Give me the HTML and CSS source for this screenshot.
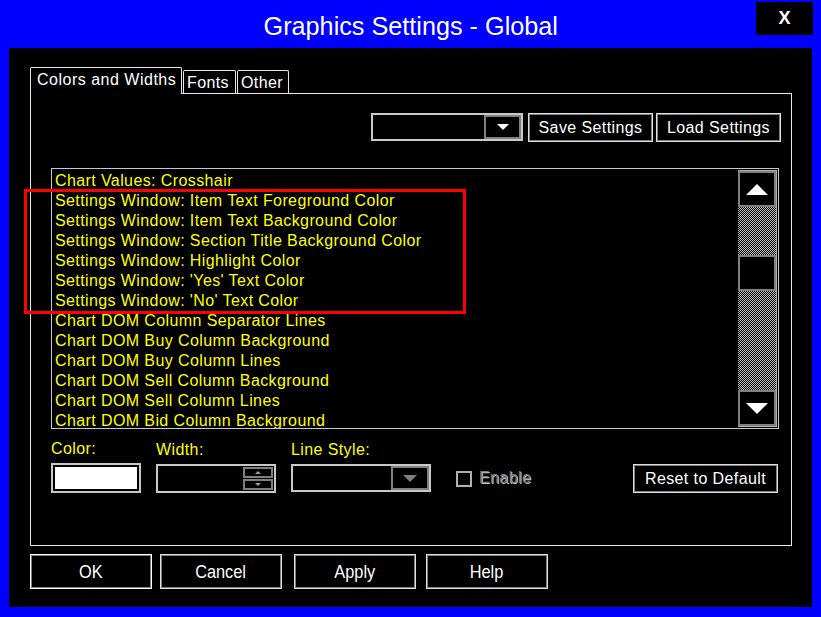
FILE: index.html
```html
<!DOCTYPE html>
<html>
<head>
<meta charset="utf-8">
<title>Graphics Settings - Global</title>
<link rel="stylesheet" href="styles.css">
</head>
<body>
<div class="window">
  <div class="titlebar">
    <span class="title">Graphics Settings - Global</span>
    <div class="close">X</div>
  </div>
  <div class="client">
    <div class="tabs">
      <div class="tab active">Colors and Widths</div>
      <div class="tab">Fonts</div>
      <div class="tab">Other</div>
    </div>
    <div class="panel">
      <div class="toprow">
        <div class="combo">
          <div class="combo-field"></div>
          <div class="combo-btn"><span class="tri-down white"></span></div>
        </div>
        <div class="btn save">Save Settings</div>
        <div class="btn load">Load Settings</div>
      </div>
      <div class="listwrap">
        <div class="list">
          <div class="row">Chart Values: Crosshair</div>
          <div class="row">Settings Window: Item Text Foreground Color</div>
          <div class="row">Settings Window: Item Text Background Color</div>
          <div class="row">Settings Window: Section Title Background Color</div>
          <div class="row">Settings Window: Highlight Color</div>
          <div class="row">Settings Window: 'Yes' Text Color</div>
          <div class="row">Settings Window: 'No' Text Color</div>
          <div class="row">Chart DOM Column Separator Lines</div>
          <div class="row">Chart DOM Buy Column Background</div>
          <div class="row">Chart DOM Buy Column Lines</div>
          <div class="row">Chart DOM Sell Column Background</div>
          <div class="row">Chart DOM Sell Column Lines</div>
          <div class="row">Chart DOM Bid Column Background</div>
        </div>
        <div class="scrollbar">
          <div class="sb-btn"><span class="tri-up big"></span></div>
          <div class="sb-track t1"></div>
          <div class="sb-thumb"></div>
          <div class="sb-track t2"></div>
          <div class="sb-btn"><span class="tri-down big"></span></div>
        </div>
      </div>
      <div class="controls">
        <div class="group g-color">
          <div class="label">Color:</div>
          <div class="swatch"><div class="swatch-fill"></div></div>
        </div>
        <div class="group g-width">
          <div class="label">Width:</div>
          <div class="spin">
            <div class="spin-field"></div>
            <div class="spin-btns">
              <div class="spin-btn"><span class="tri-up small"></span></div>
              <div class="spin-btn"><span class="tri-down small"></span></div>
            </div>
          </div>
        </div>
        <div class="group g-style">
          <div class="label">Line Style:</div>
          <div class="lcombo">
            <div class="lcombo-field"></div>
            <div class="lcombo-btn"><span class="tri-down gray"></span></div>
          </div>
        </div>
        <div class="enable">
          <span class="checkbox"></span>
          <span class="enable-text">Enable</span>
        </div>
        <div class="btn reset">Reset to Default</div>
      </div>
    </div>
    <div class="buttons">
      <div class="dbtn ok"><span class="dlabel">OK</span></div>
      <div class="dbtn cancel"><span class="dlabel">Cancel</span></div>
      <div class="dbtn apply"><span class="dlabel">Apply</span></div>
      <div class="dbtn help"><span class="dlabel">Help</span></div>
    </div>
  </div>
  <div class="highlight"></div>
</div>
</body>
</html>
```
FILE: styles.css
```css
* { box-sizing: border-box; }
html, body { margin: 0; padding: 0; background: #0000ff; }
body { font-family: "Liberation Sans", Arial, sans-serif; }

.window {
  position: relative;
  width: 821px;
  height: 617px;
  background: #0000ff;
  padding: 0 9px 10px 9px;
  display: flex;
  flex-direction: column;
}

.titlebar {
  position: relative;
  height: 48px;
  display: flex;
  align-items: center;
  justify-content: center;
}
.title {
  color: #fff;
  font-size: 26px;
  font-family: "Liberation Sans", sans-serif;
  display: inline-block;
  transform: scaleX(0.97);
  margin-top: 5px;
}
.close {
  position: absolute;
  right: -1px;
  top: 2px;
  width: 57px;
  height: 33px;
  background: #000;
  color: #fff;
  font-weight: bold;
  font-size: 18px;
  display: flex;
  align-items: center;
  justify-content: center;
}

.client {
  flex: 1;
  background: #000;
  padding: 19px 20px 0 21px;
  display: flex;
  flex-direction: column;
  font-size: 16px;
  letter-spacing: 0.4px;
}

.tabs {
  display: flex;
  align-items: flex-end;
  height: 26px;
  position: relative;
  z-index: 1;
}
.tab {
  color: #fff;
  background: #000;
  border: 1px solid #e8e8e8;
  border-bottom: none;
  border-radius: 2px 2px 0 0;
  height: 23px;
  padding: 2px 0 0 3px;
  line-height: 20px;
}
.tab.active {
  width: 152px;
  height: 27px;
  margin-bottom: -1px;
  padding: 2px 0 0 6px;
  letter-spacing: 0.5px;
}
.tab:nth-child(2) { width: 53px; margin-left: 1px; }
.tab:nth-child(3) { width: 52px; margin-left: 1px; }

.panel {
  width: 762px;
  height: 453px;
  border: 1px solid #e8e8e8;
  padding: 19px 10px 0 20px;
  display: flex;
  flex-direction: column;
}

.toprow {
  display: flex;
  justify-content: flex-end;
  align-items: flex-start;
  height: 29px;
}
.combo {
  width: 152px;
  height: 28px;
  border: 2px solid #c8c8c8;
  display: flex;
  margin-right: 5px;
}
.combo-field { flex: 1; }
.combo-btn {
  width: 37px;
  border: 2px solid #808080;
  display: flex;
  align-items: center;
  justify-content: center;
}
.btn {
  color: #fff;
  border: 1px solid #e0e0e0;
  box-shadow: inset 0 0 0 1px #808080;
  display: flex;
  align-items: center;
  justify-content: center;
  height: 29px;
}
.save { width: 125px; margin-right: 3px; }
.load { width: 125px; }

.listwrap {
  margin-top: 26px;
  width: 728px;
  height: 261px;
  border: 1px solid #c8c8c8;
  display: flex;
}
.list { flex: 1; padding: 2px 0 0 3px; overflow: hidden; }
.row {
  color: #ffff00;
  height: 20px;
  line-height: 20px;
  white-space: nowrap;
}
.scrollbar {
  width: 39px;
  margin: 1px 1px 1px 0;
  border: 1px solid #b0b0b0;
  border-left: none;
  display: flex;
  flex-direction: column;
}
.sb-btn {
  height: 36px;
  border: 2px solid #808080;
  background: #000;
  display: flex;
  align-items: center;
  justify-content: center;
}
.sb-track {
  background: repeating-conic-gradient(#c0c0c0 0 25%, #000 0 50%) 0 0 / 2px 2px;
}
.t1 { height: 48px; }
.t2 { flex: 1; }
.sb-thumb {
  height: 36px;
  border: 2px solid #808080;
  background: #000;
}

.tri-up, .tri-down { width: 0; height: 0; display: block; }
.tri-up.big { border-left: 11px solid transparent; border-right: 11px solid transparent; border-bottom: 11px solid #fff; }
.tri-down.big { border-left: 11px solid transparent; border-right: 11px solid transparent; border-top: 11px solid #fff; }
.tri-down.white { border-left: 6px solid transparent; border-right: 6px solid transparent; border-top: 6px solid #fff; }
.tri-down.gray { border-left: 7px solid transparent; border-right: 7px solid transparent; border-top: 7px solid #808080; }
.tri-up.small { border-left: 3px solid transparent; border-right: 3px solid transparent; border-bottom: 3px solid #a0a0a0; }
.tri-down.small { border-left: 3px solid transparent; border-right: 3px solid transparent; border-top: 3px solid #a0a0a0; }

.controls {
  display: flex;
  align-items: flex-end;
  margin-top: 11px;
}
.group { display: flex; flex-direction: column; }
.label {
  color: #ffff00;
  height: 23px;
  line-height: 18px;
}
.swatch {
  width: 90px;
  height: 30px;
  border: 2px solid #c8c8c8;
  padding: 2px;
}
.swatch-fill { width: 100%; height: 100%; background: #fff; }
.g-width { margin-left: 15px; }
.spin {
  width: 120px;
  height: 29px;
  border: 2px solid #c8c8c8;
  display: flex;
}
.spin-field { flex: 1; }
.spin-btns {
  width: 31px;
  display: flex;
  flex-direction: column;
  padding: 1px 1px 1px 0;
  gap: 1px;
}
.spin-btn {
  flex: 1;
  border: 2px solid #808080;
  display: flex;
  align-items: center;
  justify-content: center;
}
.g-style { margin-left: 15px; }
.lcombo {
  width: 140px;
  height: 28px;
  border: 2px solid #c8c8c8;
  display: flex;
  margin-bottom: 1px;
}
.lcombo-field { flex: 1; }
.lcombo-btn {
  width: 38px;
  border: 2px solid #808080;
  display: flex;
  align-items: center;
  justify-content: center;
}
.enable {
  display: flex;
  align-items: center;
  margin-left: 25px;
  height: 29px;
}
.checkbox {
  width: 16px;
  height: 16px;
  border: 2px solid #b0b0b0;
  margin-right: 7px;
}
.enable-text {
  color: #808080;
  text-shadow: 1px 1px 0 #c0c0c0;
  margin-top: -1px;
}
.reset {
  margin-left: auto;
  margin-right: 3px;
  width: 145px;
  height: 29px;
}

.buttons {
  display: flex;
  margin-top: 8px;
  letter-spacing: 0;
}
.dbtn {
  color: #fff;
  width: 122px;
  height: 35px;
  border: 1px solid #e0e0e0;
  box-shadow: inset 0 0 0 1px #808080;
  display: flex;
  align-items: center;
  justify-content: center;
  font-size: 19px;
}
.dlabel { display: inline-block; transform: scaleX(0.86); }
.ok { border-color: #fff; }
.cancel { margin-left: 8px; }
.apply { margin-left: 12px; }
.help { margin-left: 10px; }

.highlight {
  position: absolute;
  left: 24px;
  top: 189px;
  width: 442px;
  height: 125px;
  border: 3px solid #ff0000;
  pointer-events: none;
}
```
